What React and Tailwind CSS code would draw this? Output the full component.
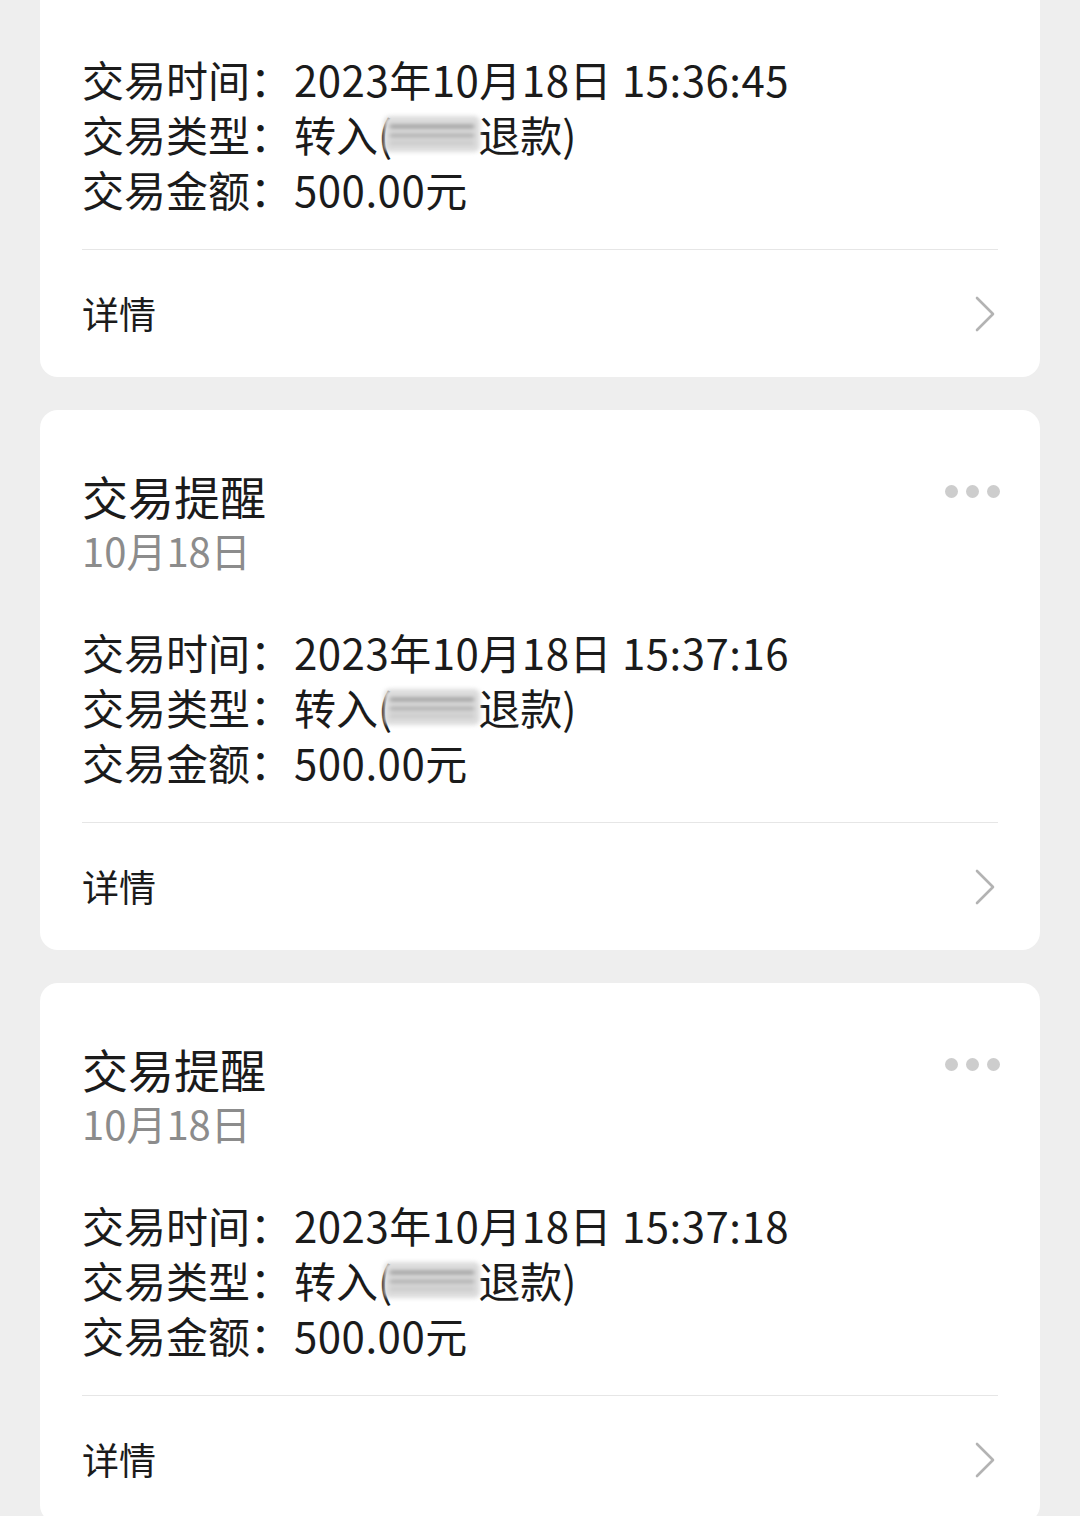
import React from 'react';

const cards = [
    { time: '2023年10月18日 15:36:45' },
    { time: '2023年10月18日 15:37:16' },
    { time: '2023年10月18日 15:37:18' },
];

const Blur = () => (
    <span className="relative inline-block align-middle w-[96px] h-[36px] -ml-[8px] -mr-[2px] rounded-[6px] bg-[#dcdcdc] blur-[2px] overflow-hidden">
        <span className="absolute left-[6px] right-[6px] top-[9px] h-[3px] bg-[#8a8a8a]" />
        <span className="absolute left-[6px] right-[6px] top-[18px] h-[3px] bg-[#a0a0a0]" />
        <span className="absolute left-[6px] right-[6px] top-[26px] h-[2px] bg-[#b8b8b8]" />
    </span>
);

const Chevron = () => (
    <svg width="22" height="36" viewBox="0 0 22 36" fill="none">
        <path d="M3 2 L19 18 L3 34" stroke="#b3b3b3" strokeWidth="2.6" strokeLinecap="round" strokeLinejoin="round" />
    </svg>
);

const Card = ({ time, first }) => (
    <div className={`mx-[40px] bg-white rounded-[18px] ${first ? 'mt-[-163px]' : ''}`}>
        <div className="px-[42px]">
            {/* header: title + date + more dots */}
            <div className="pt-[58px] flex justify-between">
                <div>
                    <div className="text-[46px] leading-[54px] text-[#1b1b1b]">交易提醒</div>
                    <div className="mt-[3px] text-[40px] leading-[50px] text-[#8c8c8c]">10月18日</div>
                </div>
                <div className="flex gap-[8px] mt-[17px] mr-[-2px]">
                    <span className="w-[13px] h-[13px] rounded-full bg-[#cdcdcd]" />
                    <span className="w-[13px] h-[13px] rounded-full bg-[#cdcdcd]" />
                    <span className="w-[13px] h-[13px] rounded-full bg-[#cdcdcd]" />
                </div>
            </div>

            <div className="mt-[49px] text-[42px] leading-[55px] text-[#1b1b1b]">
                <div className="flex">
                    <span className="w-[212px]">交易时间：</span>
                    <span className="tracking-[0.5px]">{time}</span>
                </div>
                <div className="flex items-center">
                    <span className="w-[212px]">交易类型：</span>
                    <span>转入(</span>
                    <Blur />
                    <span>退款)</span>
                </div>
                <div className="flex">
                    <span className="w-[212px]">交易金额：</span>
                    <span className="tracking-[0.5px]">500.00元</span>
                </div>
            </div>

            <div className="mt-[33px] h-px bg-[#e6e6e6]" />

            <div className="h-[127px] flex items-center justify-between">
                <span className="text-[37px] text-[#1b1b1b]">详情</span>
                <span className="mr-[2px]"><Chevron /></span>
            </div>
        </div>
    </div>
);

const App = () => {
    return (
        <div
            className="w-[1080px] h-[1516px] overflow-hidden bg-[#eeeeee] flex flex-col gap-[33px]"
            style={{ fontFamily: '"Noto Sans CJK SC", "Noto Sans", sans-serif' }}
        >
            {cards.map((c, i) => (
                <Card key={i} time={c.time} first={i === 0} />
            ))}
        </div>
    );
};

export default App;
